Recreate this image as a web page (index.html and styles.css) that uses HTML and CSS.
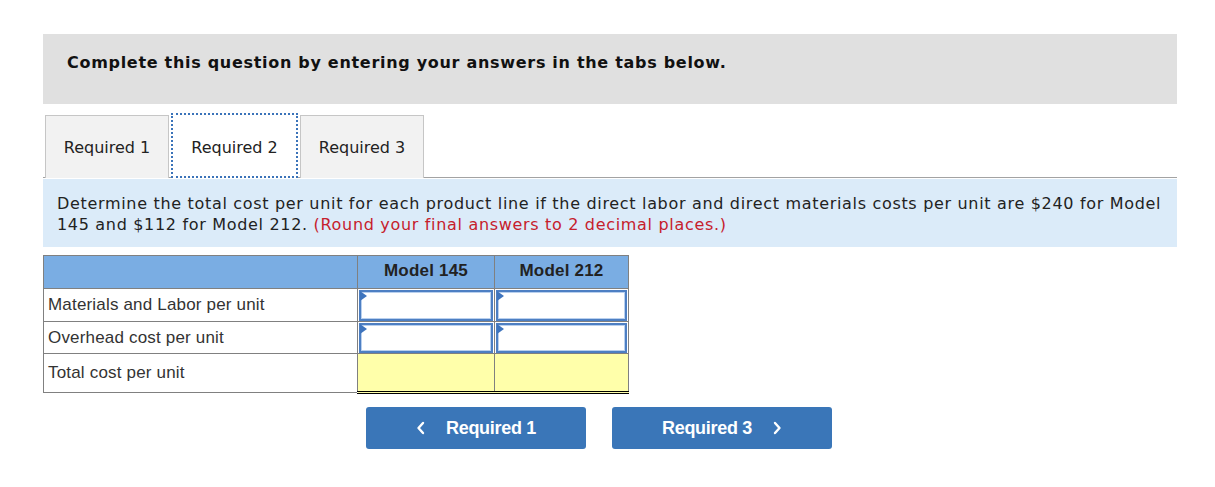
FILE: index.html
```html
<!DOCTYPE html>
<html>
<head>
<meta charset="utf-8">
<link rel="stylesheet" href="styles.css">
</head>
<body>
<div class="page">
  <div class="prompt">Complete this question by entering your answers in the tabs below.</div>
  <div class="tabs">
    <div class="tab">Required 1</div>
    <div class="tab active">Required 2</div>
    <div class="tab">Required 3</div>
  </div>
  <div class="info">Determine the total cost per unit for each product line if the direct labor and direct materials costs per unit are $240 for Model 145 and $112 for Model 212. <span class="hint">(Round your final answers to 2 decimal places.)</span></div>
  <table class="grid">
    <colgroup><col class="c1"><col class="c2"><col class="c3"></colgroup>
    <tr class="head"><th></th><th>Model 145</th><th>Model 212</th></tr>
    <tr class="r1"><td class="label">Materials and Labor per unit</td><td class="inp"><div class="box"><span class="flag"></span></div></td><td class="inp"><div class="box"><span class="flag"></span></div></td></tr>
    <tr class="r2"><td class="label">Overhead cost per unit</td><td class="inp"><div class="box"><span class="flag"></span></div></td><td class="inp"><div class="box"><span class="flag"></span></div></td></tr>
    <tr class="r3"><td class="label">Total cost per unit</td><td class="total"></td><td class="total"></td></tr>
  </table>
  <div class="nav">
    <button class="btn"><svg class="chev" width="10" height="14" viewBox="0 0 10 14"><polyline points="7,2 2.5,7 7,12" fill="none" stroke="#fff" stroke-width="2.4" stroke-linecap="round" stroke-linejoin="round"/></svg><span class="btn-text">Required 1</span></button>
    <button class="btn"><span class="btn-text">Required 3</span><svg class="chev" width="10" height="14" viewBox="0 0 10 14"><polyline points="3,2 7.5,7 3,12" fill="none" stroke="#fff" stroke-width="2.4" stroke-linecap="round" stroke-linejoin="round"/></svg></button>
  </div>
</div>
</body>
</html>
```
FILE: styles.css
```css
html, body { margin: 0; padding: 0; background: #fff; }
.page {
  margin: 34px 0 0 43px;
  width: 1134px;
  font-family: "DejaVu Sans", Verdana, sans-serif;
  color: #222;
}
.prompt {
  height: 70px;
  box-sizing: border-box;
  background: #e0e0e0;
  padding: 19px 0 0 24px;
  font-size: 16px;
  letter-spacing: 0.7px;
  font-weight: bold;
  line-height: 20px;
  color: #111;
}
.tabs {
  display: flex;
  margin-top: 11px;
  padding-left: 2px;
  border-bottom: 1px solid #a3a3a3;
  height: 62px;
}
.tab {
  box-sizing: border-box;
  width: 124px;
  height: 63px;
  margin-right: 2px;
  background: #f2f2f2;
  border: 1px solid #c6c6c6;
  border-bottom: none;
  font-size: 16px;
  color: #222;
  display: flex;
  align-items: center;
  justify-content: center;
  padding-top: 1px;
}
.tab.active {
  background: #fff;
  width: 127px;
  height: 65px;
  margin-top: -2px;
  border: 2px dotted #3b73b9;
  padding-top: 4px;
}
.info {
  margin-top: 1px;
  height: 68px;
  box-sizing: border-box;
  background: #dbebf9;
  padding: 14px 10px 0 14px;
  font-size: 16px;
  letter-spacing: 0.68px;
  line-height: 21px;
  color: #222;
}
.hint { color: #c6202c; }
.grid {
  margin-top: 8px;
  border-collapse: collapse;
  width: 585px;
  table-layout: fixed;
  font-family: "Liberation Sans", Arial, sans-serif;
  font-size: 17px;
  letter-spacing: 0.18px;
  color: #333;
  border: 1px solid #808080;
}
.c1 { width: 314px; }
.c2 { width: 137px; }
.c3 { width: 134px; }
.grid th, .grid td {
  border: 1px solid #808080;
  padding: 0;
}
.head th {
  background: #7aade3;
  height: 30px;
  font-weight: bold;
  font-size: 17px;
  letter-spacing: 0.2px;
  color: #222;
  text-align: center;
  padding-bottom: 2px;
}
.r1 td { height: 32px; }
.r2 td { height: 31px; }
.r3 td { height: 37px; }
.label { padding-left: 4px !important; }
.inp { position: relative; }
.box {
  position: relative;
  margin: 0 1px 0 1px;
  border: 2px solid #4d7fc3;
  box-shadow: inset 0 0 0 1px #b9d0ee;
  background: #fff;
  box-sizing: border-box;
  height: 31px;
}
.r2 .box { height: 30px; }
.flag {
  position: absolute;
  left: -1px;
  top: -1px;
  width: 0;
  height: 0;
  border-top: 5px solid transparent;
  border-bottom: 5px solid transparent;
  border-left: 7px solid #3e74bd;
}
.total {
  background: #ffffaa;
  border-top: 1px solid #222 !important;
  border-bottom: 3px double #000 !important;
}
.nav {
  display: flex;
  gap: 26px;
  margin-top: 13px;
  padding-left: 323px;
}
.btn {
  width: 220px;
  height: 42px;
  border: none;
  border-radius: 3px;
  background: #3a76b8;
  color: #fff;
  font-family: "Liberation Sans", Arial, sans-serif;
  font-weight: bold;
  font-size: 18px;
  display: flex;
  align-items: center;
  justify-content: center;
  gap: 20px;
  padding: 0;
}
.btn-text { letter-spacing: -0.3px; }
```
